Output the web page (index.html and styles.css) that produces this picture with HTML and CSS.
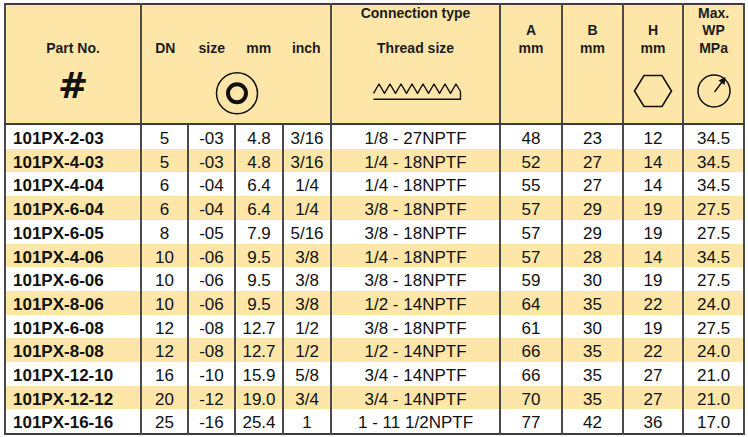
FILE: index.html
```html
<!DOCTYPE html>
<html lang="en">
<head>
<meta charset="utf-8">
<title>101PX fittings</title>
<link rel="stylesheet" href="styles.css">
</head>
<body>
<table class="spec">
  <colgroup>
    <col class="c-part"><col class="c-dn"><col class="c-size"><col class="c-mm"><col class="c-inch">
    <col class="c-thread"><col class="c-a"><col class="c-b"><col class="c-h"><col class="c-wp">
  </colgroup>
  <thead>
    <tr>
      <th>
        <div class="lbl"><span>Part No.</span></div>
        <div class="ic ic-hash"><span class="hash">#</span></div>
      </th>
      <th colspan="4">
        <div class="lbl lbl-grid"><span>DN</span><span>size</span><span>mm</span><span>inch</span></div>
        <div class="ic">
          <svg width="50" height="66" viewBox="0 0 50 66"><circle cx="26" cy="36.3" r="20.5" fill="none" stroke="#111" stroke-width="1.5"/><circle cx="26" cy="36.3" r="9" fill="none" stroke="#111" stroke-width="4"/></svg>
        </div>
      </th>
      <th>
        <div class="lbl"><span>Connection type</span><span>&nbsp;</span><span>Thread size</span></div>
        <div class="ic">
          <svg width="100" height="66" viewBox="0 0 100 66"><path d="M7.5 36.3 L13 27 L18.5 36.3 L24 27 L29.5 36.3 L35 27 L40.5 36.3 L46 27 L51.5 36.3 L57 27 L62.5 36.3 L68 27 L73.5 36.3 L79 27 L84.5 36.3 L90 27 L94.5 34.5 L94.5 42.3 L7.5 42.3" fill="none" stroke="#111" stroke-width="1.4" stroke-linejoin="round"/></svg>
        </div>
      </th>
      <th>
        <div class="lbl"><span>A</span><span>mm</span></div>
        <div class="ic"></div>
      </th>
      <th>
        <div class="lbl"><span>B</span><span>mm</span></div>
        <div class="ic"></div>
      </th>
      <th>
        <div class="lbl"><span>H</span><span>mm</span></div>
        <div class="ic">
          <svg width="50" height="66" viewBox="0 0 50 66"><polygon points="6.5,34 16,18.5 34,18.5 43.5,34 34,49.5 16,49.5" fill="none" stroke="#111" stroke-width="1.6"/></svg>
        </div>
      </th>
      <th>
        <div class="lbl"><span>Max.</span><span>WP</span><span>MPa</span></div>
        <div class="ic">
          <svg width="50" height="66" viewBox="0 0 50 66"><circle cx="25" cy="34" r="16" fill="none" stroke="#111" stroke-width="1.5"/><line x1="25.5" y1="35" x2="33" y2="25" stroke="#111" stroke-width="1.4"/><polygon points="36.5,20 35.5,28 29.5,23.5" fill="#111"/></svg>
        </div>
      </th>
    </tr>
  </thead>
  <tbody>
    <tr><td class="pn">101PX-2-03</td><td>5</td><td>-03</td><td>4.8</td><td>3/16</td><td class="th">1/8 - 27NPTF</td><td>48</td><td>23</td><td>12</td><td>34.5</td></tr>
    <tr class="alt"><td class="pn">101PX-4-03</td><td>5</td><td>-03</td><td>4.8</td><td>3/16</td><td class="th">1/4 - 18NPTF</td><td>52</td><td>27</td><td>14</td><td>34.5</td></tr>
    <tr><td class="pn">101PX-4-04</td><td>6</td><td>-04</td><td>6.4</td><td>1/4</td><td class="th">1/4 - 18NPTF</td><td>55</td><td>27</td><td>14</td><td>34.5</td></tr>
    <tr class="alt"><td class="pn">101PX-6-04</td><td>6</td><td>-04</td><td>6.4</td><td>1/4</td><td class="th">3/8 - 18NPTF</td><td>57</td><td>29</td><td>19</td><td>27.5</td></tr>
    <tr><td class="pn">101PX-6-05</td><td>8</td><td>-05</td><td>7.9</td><td>5/16</td><td class="th">3/8 - 18NPTF</td><td>57</td><td>29</td><td>19</td><td>27.5</td></tr>
    <tr class="alt"><td class="pn">101PX-4-06</td><td>10</td><td>-06</td><td>9.5</td><td>3/8</td><td class="th">1/4 - 18NPTF</td><td>57</td><td>28</td><td>14</td><td>34.5</td></tr>
    <tr><td class="pn">101PX-6-06</td><td>10</td><td>-06</td><td>9.5</td><td>3/8</td><td class="th">3/8 - 18NPTF</td><td>59</td><td>30</td><td>19</td><td>27.5</td></tr>
    <tr class="alt"><td class="pn">101PX-8-06</td><td>10</td><td>-06</td><td>9.5</td><td>3/8</td><td class="th">1/2 - 14NPTF</td><td>64</td><td>35</td><td>22</td><td>24.0</td></tr>
    <tr><td class="pn">101PX-6-08</td><td>12</td><td>-08</td><td>12.7</td><td>1/2</td><td class="th">3/8 - 18NPTF</td><td>61</td><td>30</td><td>19</td><td>27.5</td></tr>
    <tr class="alt"><td class="pn">101PX-8-08</td><td>12</td><td>-08</td><td>12.7</td><td>1/2</td><td class="th">1/2 - 14NPTF</td><td>66</td><td>35</td><td>22</td><td>24.0</td></tr>
    <tr><td class="pn">101PX-12-10</td><td>16</td><td>-10</td><td>15.9</td><td>5/8</td><td class="th">3/4 - 14NPTF</td><td>66</td><td>35</td><td>27</td><td>21.0</td></tr>
    <tr class="alt"><td class="pn">101PX-12-12</td><td>20</td><td>-12</td><td>19.0</td><td>3/4</td><td class="th">3/4 - 14NPTF</td><td>70</td><td>35</td><td>27</td><td>21.0</td></tr>
    <tr><td class="pn">101PX-16-16</td><td>25</td><td>-16</td><td>25.4</td><td>1</td><td class="th">1 - 11 1/2NPTF</td><td>77</td><td>42</td><td>36</td><td>17.0</td></tr>
  </tbody>
</table>
</body>
</html>
```

FILE: styles.css
```css
html, body {
  margin: 0;
  padding: 0;
  background: #ffffff;
}

.spec {
  margin: 3px 0 0 4px;
  width: 739px;
  table-layout: fixed;
  border-collapse: collapse;
  border: 2px solid #3c3c3c;
  font-family: "Liberation Sans", Arial, sans-serif;
  color: #111;
}

.c-part { width: 136px; }
.c-dn { width: 47px; }
.c-size { width: 47px; }
.c-mm { width: 48px; }
.c-inch { width: 48px; }
.c-thread { width: 169px; }
.c-a { width: 62px; }
.c-b { width: 61px; }
.c-h { width: 60px; }
.c-wp { width: 61px; }

.spec thead th {
  background: #fde6a8;
  padding: 0;
  vertical-align: top;
  border-left: 2px solid #4a4a4a;
  border-right: 2px solid #4a4a4a;
  border-bottom: 2px solid #3c3c3c;
  font-size: 14px;
  font-weight: bold;
  color: #1c1c1c;
}

.lbl {
  height: 52px;
  display: flex;
  flex-direction: column;
  justify-content: flex-end;
  align-items: center;
  line-height: 17.5px;
}

.lbl-grid {
  display: grid;
  grid-template-columns: 47fr 47fr 48fr 48fr;
  align-items: end;
  justify-items: center;
}

.ic {
  height: 66px;
  display: flex;
  align-items: center;
  justify-content: center;
}

.ic svg {
  display: block;
}

.ic-hash {
  align-items: flex-start;
}

.hash {
  font-family: "DejaVu Sans", sans-serif;
  font-weight: bold;
  font-size: 36px;
  line-height: 36px;
  margin-top: 11px;
  color: #111;
}

.spec tbody td {
  font-size: 17px;
  line-height: 19.7px;
  padding: 4px 0 0;
  text-align: center;
  vertical-align: top;
  white-space: nowrap;
  border-left: 2px solid #4a4a4a;
  border-right: 2px solid #4a4a4a;
}

.spec tbody tr.alt td {
  background: #fde6a8;
}

.spec tbody td.pn {
  text-align: left;
  padding-left: 7px;
  font-weight: bold;
}

.spec tbody td.th {
  font-family: "Liberation Sans Narrow", "Liberation Sans", Arial, sans-serif;
  font-stretch: condensed;
}
```
